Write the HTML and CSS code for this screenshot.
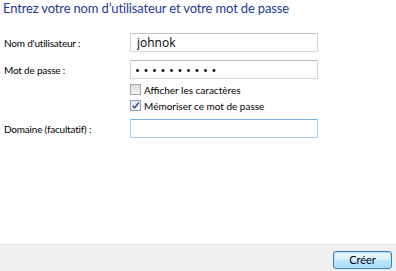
FILE: index.html
```html
<!DOCTYPE html>
<html lang="fr">
<head>
    <meta charset="UTF-8">
    <title>Connexion</title>
    <link rel="stylesheet" href="styles.css">
</head>
<body>

<div class="dialog">
    <div class="content">
        <h1 class="title">Entrez votre nom d’utilisateur et votre mot de passe</h1>

        <div class="form">
            <label class="label" for="user">Nom d'utilisateur :</label>
            <input class="field" type="text" id="user" value="johnok">

            <label class="label" for="pass">Mot de passe :</label>
            <input class="field" type="password" id="pass" value="motdepass1">

            <div class="check-row">
                <span class="box"></span>
                <span>Afficher les caractères</span>
            </div>
            <div class="check-row">
                <span class="box checked">
                    <svg width="9" height="9" viewBox="0 0 9 9"><path d="M1.5 4.8 L3.6 7 L7.8 1.5" fill="none" stroke="#2a4a9a" stroke-width="1.4"/></svg>
                </span>
                <span>Mémoriser ce mot de passe</span>
            </div>

            <label class="label" for="domain">Domaine (facultatif) :</label>
            <input class="field field-focus" type="text" id="domain">
        </div>
    </div>

    <!-- Bottom command area -->
    <div class="footer">
        <button class="btn">Créer</button>
    </div>
</div>

</body>
</html>
```

FILE: styles.css
```css
body {
    margin: 0;
    padding: 0;
    font-family: 'Lato', 'Open Sans', sans-serif;
    font-size: 10px;
    color: #000;
    background-color: #fff;
}

.dialog {
    display: flex;
    flex-direction: column;
    height: 100vh;
}

.content {
    flex: 1;
}

.title {
    margin: 0;
    padding: 0 0 0 3px;
    font-size: 13px;
    line-height: 16px;
    letter-spacing: -0.15px;
    font-weight: normal;
    color: #1e3a96;
}

.form {
    display: grid;
    grid-template-columns: 130px 188px;
    row-gap: 8px;
    align-items: center;
    margin-top: 17px;
}

.label {
    padding-left: 4px;
    letter-spacing: -0.2px;
}

.field {
    box-sizing: border-box;
    width: 188px;
    height: 19px;
    margin: 0;
    padding: 0 6px;
    border: 1px solid #d6d6d6;
    border-top-color: #c4c4c4;
    font-family: 'Open Sans', sans-serif;
    font-size: 12px;
    outline: none;
}

#pass {
    font-size: 13px;
    letter-spacing: 3.6px;
    padding-left: 4px;
}

.field-focus {
    border-color: #a8d0ee;
    border-top-color: #7eb4ea;
}

.check-row {
    grid-column: 2;
    display: flex;
    align-items: center;
    gap: 3px;
    margin-top: -3px;
    height: 11px;
}

.box {
    box-sizing: border-box;
    width: 11px;
    height: 11px;
    border: 1px solid #a8a8a8;
    background: linear-gradient(#dcdcdc, #f4f4f4);
    display: flex;
    align-items: center;
    justify-content: center;
}

.box.checked {
    background: linear-gradient(#e4e9f4, #f8f9fc);
    border-color: #8e9ab4;
}

.footer {
    height: 26px;
    background-color: #f0f0f0;
    border-top: 1px solid #dfdfdf;
    display: flex;
    justify-content: flex-end;
    align-items: center;
    padding-right: 4px;
}

.btn {
    width: 59px;
    height: 18px;
    padding: 0;
    margin-top: 3px;
    font-family: 'Lato', sans-serif;
    font-size: 11px;
    color: #000;
    border: 1px solid #3c7fb1;
    border-radius: 3px;
    background: linear-gradient(#eaf6fd 0%, #d9f0fc 50%, #bee6fd 51%, #a7d9f5 100%);
    box-shadow: inset 0 0 0 1px #b4e4fb;
}
```
